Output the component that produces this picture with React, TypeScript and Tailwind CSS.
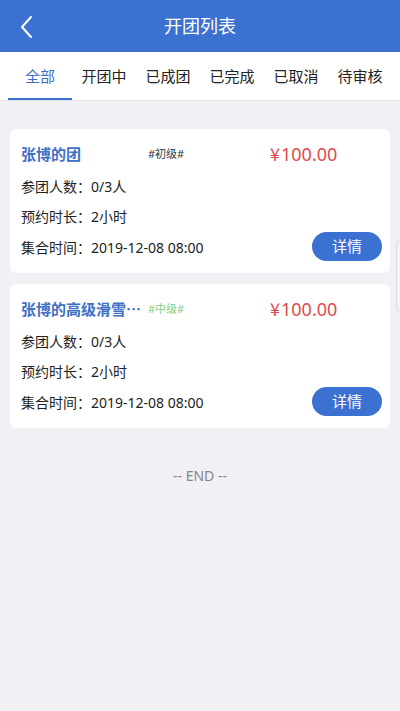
import { useState } from "react";

type Group = {
  id: number;
  title: string;
  level: string;
  levelColor: string;
  price: string;
  members: string;
  duration: string;
  meetTime: string;
};

const TABS = ["全部", "开团中", "已成团", "已完成", "已取消", "待审核"];

const GROUPS: Group[] = [
  {
    id: 1,
    title: "张博的团",
    level: "#初级#",
    levelColor: "text-[#333333]",
    price: "100.00",
    members: "0/3人",
    duration: "2小时",
    meetTime: "2019-12-08 08:00",
  },
  {
    id: 2,
    title: "张博的高级滑雪团队",
    level: "#中级#",
    levelColor: "text-[#7fd07a]",
    price: "100.00",
    members: "0/3人",
    duration: "2小时",
    meetTime: "2019-12-08 08:00",
  },
];

const GroupCard = ({ group }: { group: Group }) => {
  return (
    <div className="mx-[10px] rounded-md bg-white pl-[11px] pr-2 pt-[12px] pb-[10px]">
      <div className="flex items-center h-[26px]">
        <div className="flex items-center w-[249px]">
          <span className="w-[121px] truncate font-['Noto_Sans_CJK_SC',sans-serif] text-[15px] font-semibold text-[#3d70c6]">
            {group.title}
          </span>
          <span className={`ml-[6px] text-[11px] ${group.levelColor}`}>
            {group.level}
          </span>
        </div>
        <span className="text-[18px] text-[#e14a4f]">
          <span className="font-['Noto_Sans_CJK_SC',sans-serif] mr-[1px]">¥</span>
          {group.price}
        </span>
      </div>
      <div className="mt-[4px] h-[30px] flex items-center text-[14px] text-[#222]">
        参团人数：{group.members}
      </div>
      <div className="h-[31px] flex items-center text-[14px] text-[#222]">
        预约时长：{group.duration}
      </div>
      <div className="h-[31px] flex items-center justify-between text-[14px] text-[#222]">
        <span>集合时间：{group.meetTime}</span>
        <button className="w-[70px] h-[29px] -mt-[2px] rounded-full bg-[#3b71d1] text-white text-[15px]">
          详情
        </button>
      </div>
    </div>
  );
};

const App = () => {
  const [activeTab, setActiveTab] = useState<number>(0);

  return (
    <div
      className="relative min-h-[711px] bg-[#f0f0f5]"
      style={{ fontFamily: '"Noto Sans", "Noto Sans CJK SC", sans-serif' }}
    >
      <div className="h-[52px] bg-[#3b71d1] flex items-center justify-center relative">
        <button className="absolute left-[14px] top-[14px] w-[24px] h-[26px] flex items-center justify-center">
          <svg width="14" height="24" viewBox="0 0 14 24" fill="none">
            <path
              d="M12 2 L3 12 L12 22"
              stroke="white"
              strokeWidth="2"
              strokeLinecap="round"
              strokeLinejoin="round"
            />
          </svg>
        </button>
        <h1 className="text-[18px] text-white">开团列表</h1>
      </div>

      <div className="h-[49px] bg-white border-b border-[#e3e3e8] px-2 grid grid-cols-6">
        {TABS.map((tab, idx) => (
          <button
            key={tab}
            onClick={() => setActiveTab(idx)}
            className={`relative text-[15px] ${
              idx === activeTab ? "text-[#3d70c6]" : "text-[#222]"
            }`}
          >
            {tab}
            {idx === activeTab && (
              <span className="absolute left-0 right-0 bottom-0 h-[2px] bg-[#3b71d1]" />
            )}
          </button>
        ))}
      </div>

      <div className="pt-[28px] flex flex-col gap-[11px]">
        {GROUPS.map((group) => (
          <GroupCard key={group.id} group={group} />
        ))}
      </div>

      <p className="mt-[37px] text-center text-[14px] text-[#888]">-- END --</p>

      <div className="absolute right-0 top-[241px] w-[4px] h-[70px] rounded-l-md border border-r-0 border-[#dcdce0] bg-[#f4f4f7]" />
    </div>
  );
};

export default App;
